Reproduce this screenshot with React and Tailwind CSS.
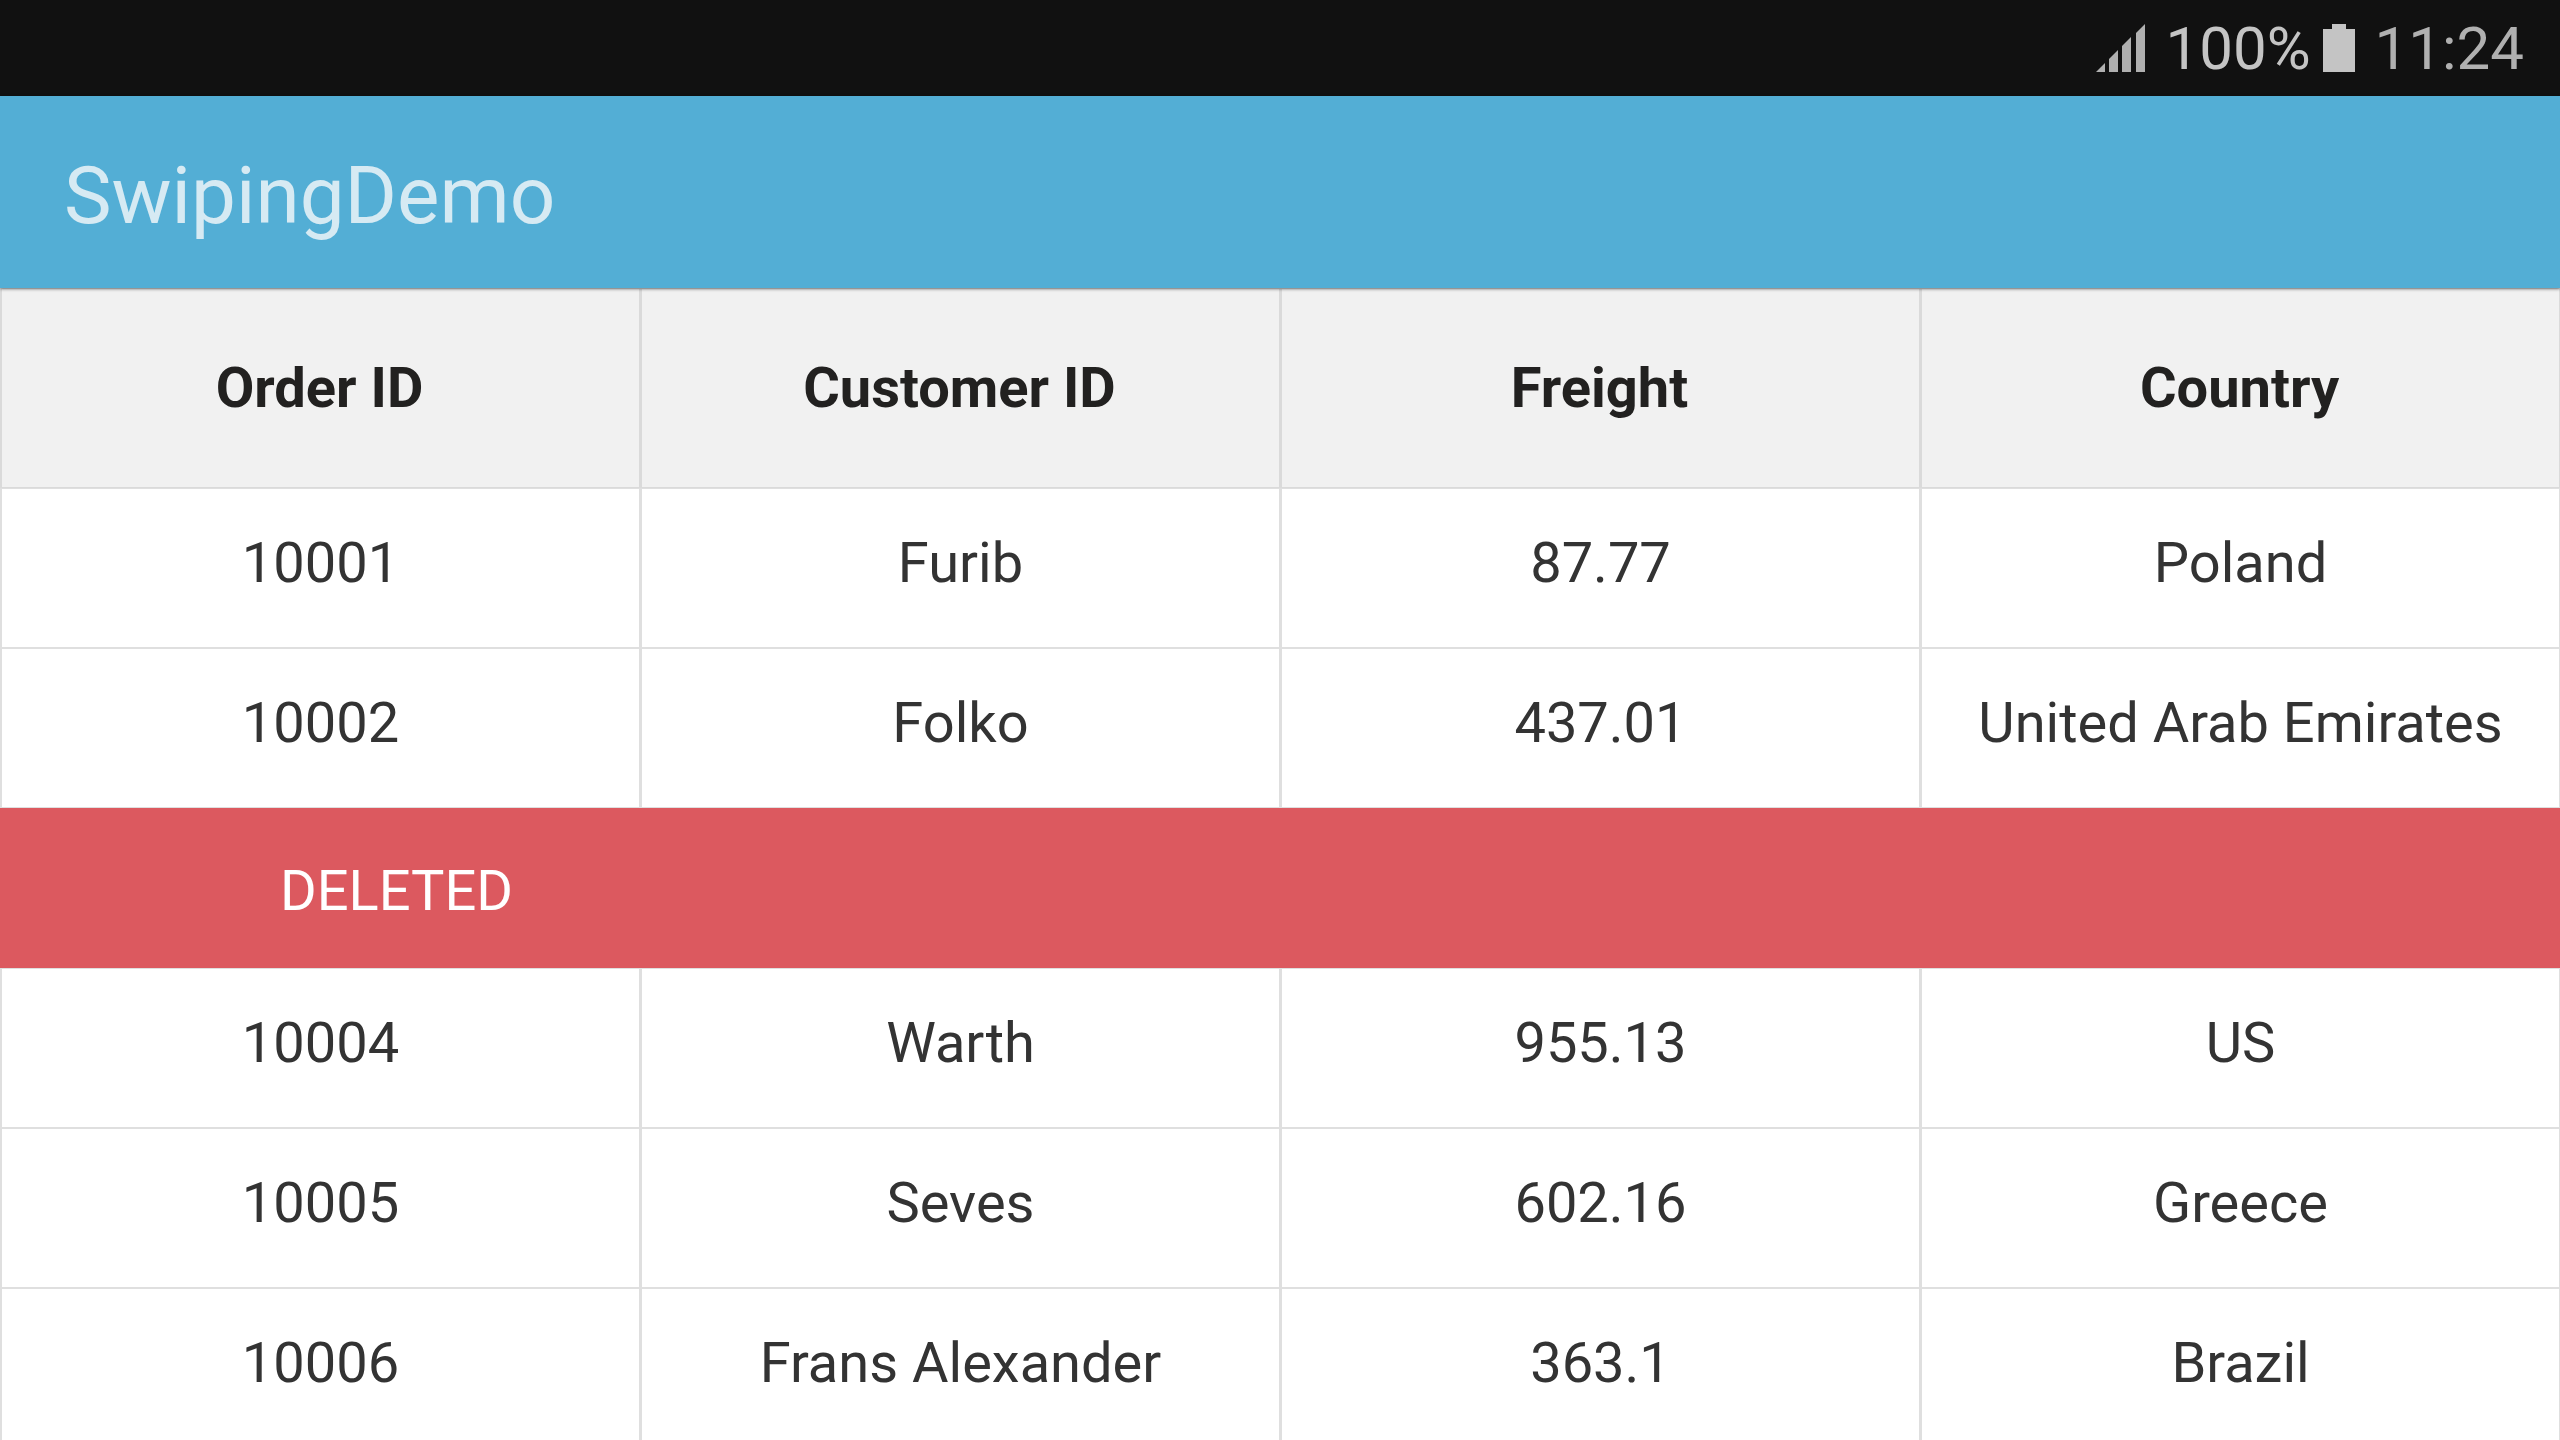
const columns = ["Order ID", "Customer ID", "Freight", "Country"];

const rows = [
  ["10001", "Furib", "87.77", "Poland"],
  ["10002", "Folko", "437.01", "United Arab Emirates"],
  null,
  ["10004", "Warth", "955.13", "US"],
  ["10005", "Seves", "602.16", "Greece"],
  ["10006", "Frans Alexander", "363.1", "Brazil"],
];

function SignalIcon() {
  return (
    <svg width="49" height="48" viewBox="0 0 49 48" fill="#b0b0b0" role="img" aria-label="Signal strength">
      <path d="M0 48 9 39V48Z" />
      <path d="M13 35 22 26V48H13Z" />
      <path d="M26 22 35 13V48H26Z" />
      <path d="M40 9 49 0V48H40Z" />
    </svg>
  );
}

function BatteryIcon() {
  return (
    <svg width="32" height="48" viewBox="0 0 32 48" fill="#c4c4c4" role="img" aria-label="Battery full">
      <path d="M9 0H23V5H32V48H0V5H9Z" />
    </svg>
  );
}

function StatusBar() {
  return (
    <div className="flex h-24 shrink-0 items-center justify-end bg-[#111111] pr-9 text-[60px] leading-none">
      <SignalIcon />
      <span className="ml-5 pt-0.5 text-[#c4c4c4]">100%</span>
      <span className="ml-3">
        <BatteryIcon />
      </span>
      <time className="ml-5 pt-0.5 text-[#b0b0b0]">11:24</time>
    </div>
  );
}

export default function App() {
  return (
    <div className="flex h-screen flex-col overflow-hidden bg-white font-[Roboto,sans-serif]">
      <StatusBar />
      <header className="relative z-10 flex h-48 shrink-0 items-center bg-[#53aed5] px-16 pt-2 shadow-[0_1px_3px_rgba(0,0,0,0.5)]">
        <h1 className="text-[80px] leading-none text-[#d6eaf3]">SwipingDemo</h1>
      </header>
      <table className="w-full shrink-0 table-fixed border-separate border-spacing-0 text-[56px] leading-none">
        <thead>
          <tr className="h-[200px] bg-[#f1f1f1] text-[#222120]">
            {columns.map((name) => (
              <th key={name} scope="col" className="border border-l-2 border-[#dadada] p-0 pr-0.5 text-center font-bold">
                {name}
              </th>
            ))}
          </tr>
        </thead>
        <tbody>
          {rows.map((row, index) =>
            row ? (
              <tr key={index} className="h-40 text-[#333333]">
                {row.map((value) => (
                  <td key={value} className="border border-l-2 border-[#dfdfdf] p-0 pb-2.5 text-center whitespace-nowrap">
                    {value}
                  </td>
                ))}
              </tr>
            ) : (
              <tr key={index} className="h-40 bg-[#dc595f] text-white">
                <td colSpan={4} className="p-0 pt-1.5 pl-[280px] text-left">
                  DELETED
                </td>
              </tr>
            ),
          )}
        </tbody>
      </table>
    </div>
  );
}
